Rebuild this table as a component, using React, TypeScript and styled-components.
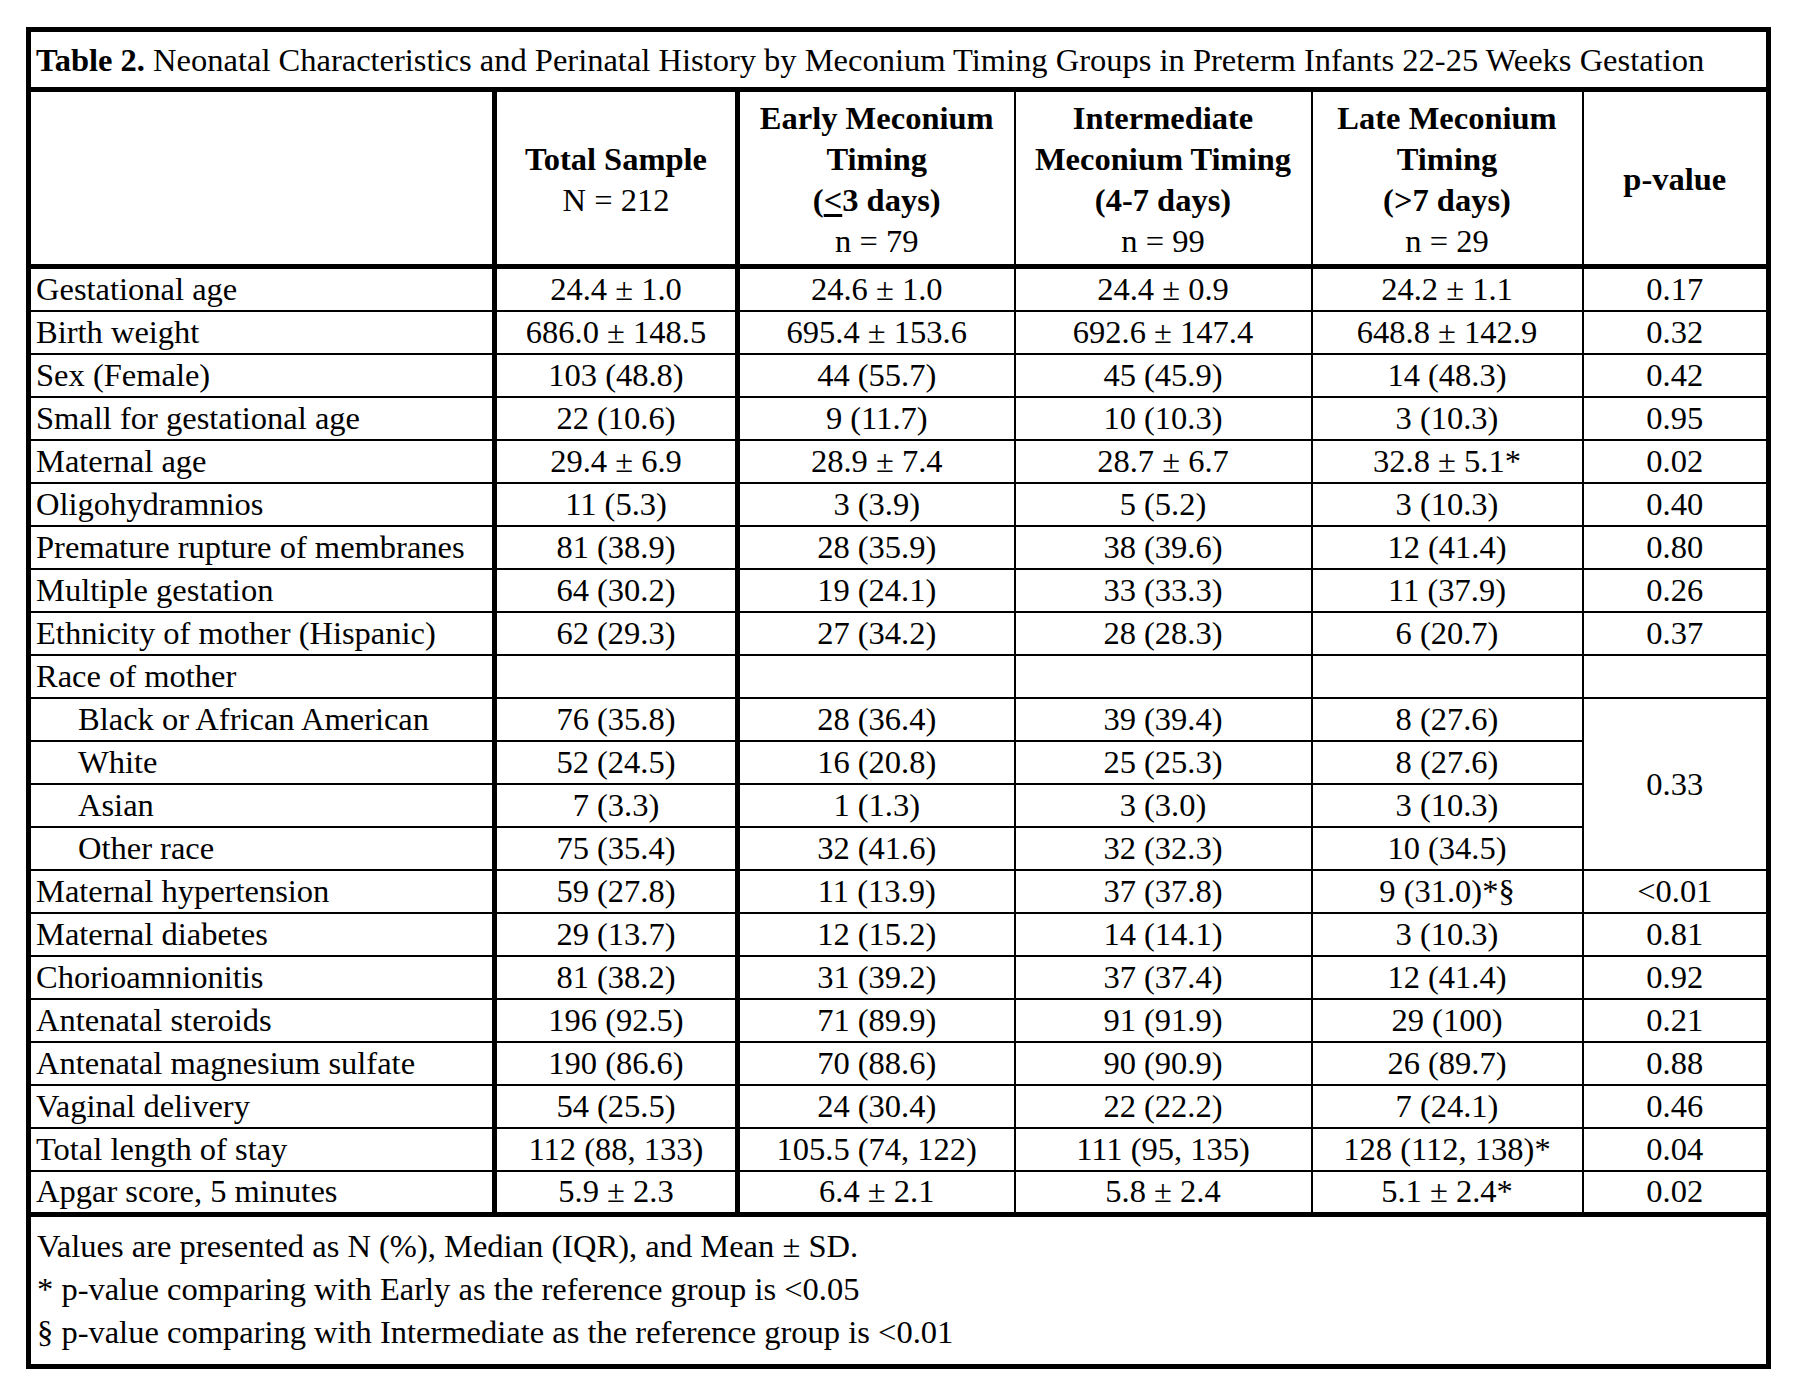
import React from 'react';
import styled, { createGlobalStyle } from 'styled-components';

const GlobalStyle = createGlobalStyle`
  html, body {
    margin: 0;
    padding: 0;
    background: #ffffff;
  }
`;

const Page = styled.div`
  padding: 27px 0 0 26px;
  font-family: 'Liberation Serif', 'Times New Roman', serif;
  font-size: 32.5px;
  color: #000;
`;

const Table = styled.table`
  width: 1745px;
  table-layout: fixed;
  border-collapse: collapse;
  border: 5px solid #000;
`;

const TitleCell = styled.td`
  height: 55px;
  padding: 0 0 0 5px;
  border-bottom: 5px solid #000;
  line-height: 40px;
  white-space: nowrap;
`;

const HeadCell = styled.th<{ $thick?: boolean }>`
  height: 169px;
  padding: 3px 4px 0;
  border-bottom: 5px solid #000;
  border-right: ${(p) => (p.$thick ? '5px' : '2px')} solid #000;
  line-height: 41px;
  font-weight: normal;
  text-align: center;
  vertical-align: middle;
`;

const Bold = styled.span`
  display: block;
  font-weight: bold;
`;

const Line = styled.span`
  display: block;
`;

const LabelCell = styled.td<{ $indent?: boolean; $last?: boolean }>`
  height: ${(p) => (p.$last ? '39.5px' : '41px')};
  padding: 0 0 0 ${(p) => (p.$indent ? '47px' : '5px')};
  border-right: 5px solid #000;
  border-bottom: ${(p) => (p.$last ? '5px' : '2px')} solid #000;
  line-height: 39px;
  white-space: nowrap;
`;

const ValueCell = styled.td<{ $thick?: boolean; $last?: boolean }>`
  height: ${(p) => (p.$last ? '39.5px' : '41px')};
  padding: 0;
  border-right: ${(p) => (p.$thick ? '5px' : '2px')} solid #000;
  border-bottom: ${(p) => (p.$last ? '5px' : '2px')} solid #000;
  line-height: 39px;
  text-align: center;
  white-space: nowrap;
`;

const FootCell = styled.td`
  height: 129px;
  padding: 8px 0 10px 6px;
  line-height: 43px;
  vertical-align: top;
`;

const Under = styled.span`
  text-decoration: underline;
  text-underline-offset: 3px;
`;

type Row = {
  label: string;
  values: string[];
  indent?: boolean;
  span?: number;
};

const rows: Row[] = [
  { label: 'Gestational age', values: ['24.4 ± 1.0', '24.6 ± 1.0', '24.4 ± 0.9', '24.2 ± 1.1', '0.17'] },
  { label: 'Birth weight', values: ['686.0 ± 148.5', '695.4 ± 153.6', '692.6 ± 147.4', '648.8 ± 142.9', '0.32'] },
  { label: 'Sex (Female)', values: ['103 (48.8)', '44 (55.7)', '45 (45.9)', '14 (48.3)', '0.42'] },
  { label: 'Small for gestational age', values: ['22 (10.6)', '9 (11.7)', '10 (10.3)', '3 (10.3)', '0.95'] },
  { label: 'Maternal age', values: ['29.4 ± 6.9', '28.9 ± 7.4', '28.7 ± 6.7', '32.8 ± 5.1*', '0.02'] },
  { label: 'Oligohydramnios', values: ['11 (5.3)', '3 (3.9)', '5 (5.2)', '3 (10.3)', '0.40'] },
  { label: 'Premature rupture of membranes', values: ['81 (38.9)', '28 (35.9)', '38 (39.6)', '12 (41.4)', '0.80'] },
  { label: 'Multiple gestation', values: ['64 (30.2)', '19 (24.1)', '33 (33.3)', '11 (37.9)', '0.26'] },
  { label: 'Ethnicity of mother (Hispanic)', values: ['62 (29.3)', '27 (34.2)', '28 (28.3)', '6 (20.7)', '0.37'] },
  { label: 'Race of mother', values: ['', '', '', '', ''] },
  { label: 'Black or African American', indent: true, span: 4, values: ['76 (35.8)', '28 (36.4)', '39 (39.4)', '8 (27.6)', '0.33'] },
  { label: 'White', indent: true, values: ['52 (24.5)', '16 (20.8)', '25 (25.3)', '8 (27.6)'] },
  { label: 'Asian', indent: true, values: ['7 (3.3)', '1 (1.3)', '3 (3.0)', '3 (10.3)'] },
  { label: 'Other race', indent: true, values: ['75 (35.4)', '32 (41.6)', '32 (32.3)', '10 (34.5)'] },
  { label: 'Maternal hypertension', values: ['59 (27.8)', '11 (13.9)', '37 (37.8)', '9 (31.0)*§', '<0.01'] },
  { label: 'Maternal diabetes', values: ['29 (13.7)', '12 (15.2)', '14 (14.1)', '3 (10.3)', '0.81'] },
  { label: 'Chorioamnionitis', values: ['81 (38.2)', '31 (39.2)', '37 (37.4)', '12 (41.4)', '0.92'] },
  { label: 'Antenatal steroids', values: ['196 (92.5)', '71 (89.9)', '91 (91.9)', '29 (100)', '0.21'] },
  { label: 'Antenatal magnesium sulfate', values: ['190 (86.6)', '70 (88.6)', '90 (90.9)', '26 (89.7)', '0.88'] },
  { label: 'Vaginal delivery', values: ['54 (25.5)', '24 (30.4)', '22 (22.2)', '7 (24.1)', '0.46'] },
  { label: 'Total length of stay', values: ['112 (88, 133)', '105.5 (74, 122)', '111 (95, 135)', '128 (112, 138)*', '0.04'] },
  { label: 'Apgar score, 5 minutes', values: ['5.9 ± 2.3', '6.4 ± 2.1', '5.8 ± 2.4', '5.1 ± 2.4*', '0.02'] },
];

const App = () => {
  return (
    <>
      <GlobalStyle />
      <Page>
        <Table>
          <colgroup>
            <col style={{ width: 466 }} />
            <col style={{ width: 243 }} />
            <col style={{ width: 277 }} />
            <col style={{ width: 297 }} />
            <col style={{ width: 271 }} />
            <col style={{ width: 186 }} />
          </colgroup>
          <tbody>
            <tr>
              <TitleCell colSpan={6}>
                <b>Table 2.</b> Neonatal Characteristics and Perinatal History by Meconium Timing Groups in
                Preterm Infants 22-25 Weeks Gestation
              </TitleCell>
            </tr>
            <tr>
              <HeadCell $thick />
              <HeadCell $thick>
                <Bold>Total Sample</Bold>
                <Line>N = 212</Line>
              </HeadCell>
              <HeadCell>
                <Bold>Early Meconium</Bold>
                <Bold>Timing</Bold>
                <Bold>
                  (<Under>&lt;</Under>3 days)
                </Bold>
                <Line>n = 79</Line>
              </HeadCell>
              <HeadCell>
                <Bold>Intermediate</Bold>
                <Bold>Meconium Timing</Bold>
                <Bold>(4-7 days)</Bold>
                <Line>n = 99</Line>
              </HeadCell>
              <HeadCell>
                <Bold>Late Meconium</Bold>
                <Bold>Timing</Bold>
                <Bold>(&gt;7 days)</Bold>
                <Line>n = 29</Line>
              </HeadCell>
              <HeadCell>
                <Bold>p-value</Bold>
              </HeadCell>
            </tr>
            {rows.map((row, i) => {
              const last = i === rows.length - 1;
              return (
                <tr key={row.label}>
                  <LabelCell $indent={row.indent} $last={last}>
                    {row.label}
                  </LabelCell>
                  {row.values.map((v, j) => (
                    <ValueCell
                      key={j}
                      $thick={j === 0}
                      $last={last}
                      rowSpan={j === 4 && row.span ? row.span : undefined}
                    >
                      {v}
                    </ValueCell>
                  ))}
                </tr>
              );
            })}
            <tr>
              <FootCell colSpan={6}>
                <Line>Values are presented as N (%), Median (IQR), and Mean ± SD.</Line>
                <Line>* p-value comparing with Early as the reference group is &lt;0.05</Line>
                <Line>§ p-value comparing with Intermediate as the reference group is &lt;0.01</Line>
              </FootCell>
            </tr>
          </tbody>
        </Table>
      </Page>
    </>
  );
};

export default App;
